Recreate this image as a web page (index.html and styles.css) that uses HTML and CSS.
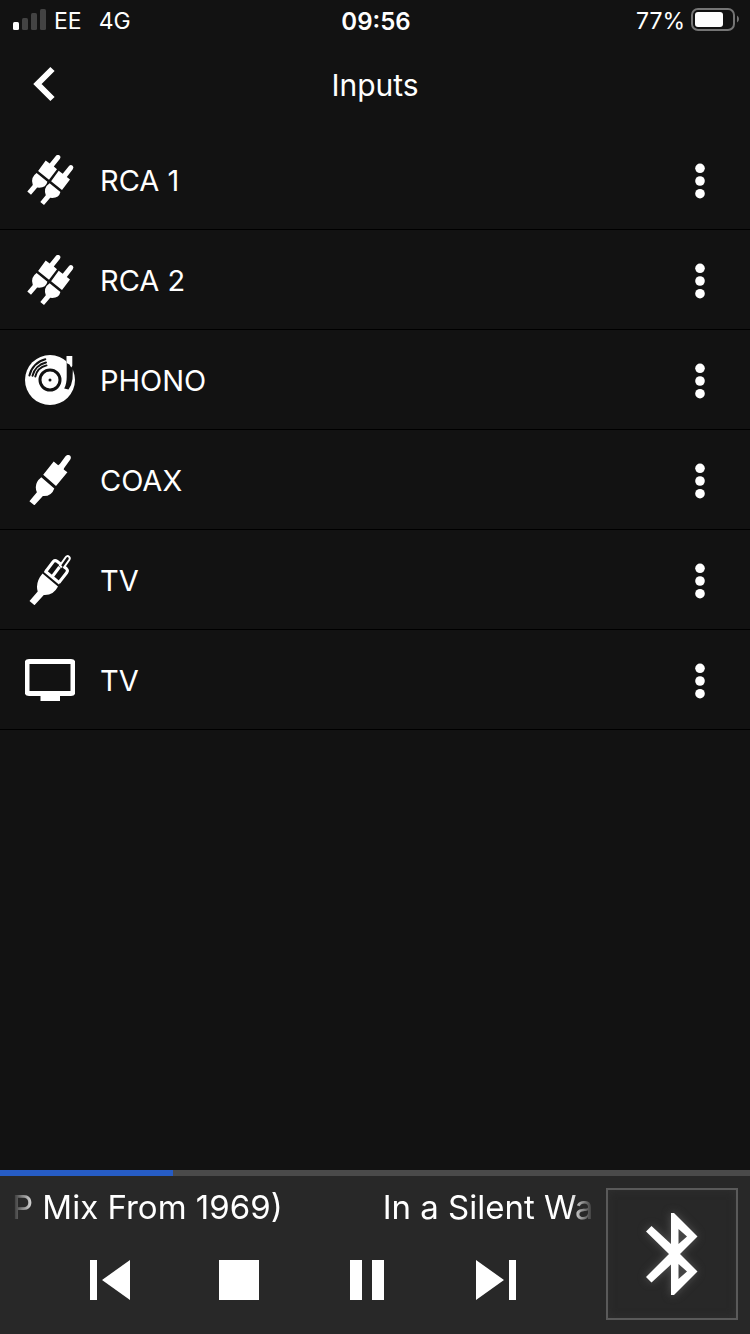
FILE: index.html
```html
<!DOCTYPE html>
<html lang="en">
<head>
<meta charset="utf-8">
<meta name="viewport" content="width=device-width, initial-scale=1">
<title>Inputs</title>
<link rel="stylesheet" href="styles.css">
</head>
<body>
<svg class="sprite" aria-hidden="true">
  <symbol id="dots" viewBox="0 0 10 36"><circle cx="5" cy="5.300" r="4.800"/><circle cx="5" cy="18" r="4.800"/><circle cx="5" cy="30.700" r="4.800"/></symbol>
  <symbol id="rca" viewBox="0 0 50 50">
    <path d="M20.700 5.500 24.700 8.500 31 .8Q32.700-1 34.600.5 36.200 2 34.800 3.900L28.800 11.600 32 14.300 24 24.800 13.100 16Z"/>
    <path d="M11.600 18 22.400 26.700Q20.900 33.500 12.200 32.500L6 39.700 2.300 36.600 7.800 30Q5 22.500 11.600 18Z"/>
    <path d="M33.700 15.800 37.700 18.800 44 11.100Q45.700 9.300 47.600 10.800 49.200 12.300 47.800 14.200L41.800 21.900 45 24.600 37 35.100 26.100 26.300Z"/>
    <path d="M24.600 28.300 35.400 37Q33.900 43.800 25.200 42.800L19 50 15.300 46.900 20.800 40.300Q18 32.800 24.600 28.300Z"/>
  </symbol>
  <symbol id="phono" viewBox="0 0 50 50">
    <circle cx="25" cy="25" r="25"/>
    <g class="cut"><circle cx="25" cy="25" r="10"/><path d="M4.400 20.500A21.200 21.200 0 0 1 20.300 4.300M7.500 20.800A18 18 0 0 1 21 7.500M10.300 21.500A15 15 0 0 1 21.500 10.400"/></g>
    <circle class="hole" cx="25" cy="25" r="1.500"/>
    <path class="hole" d="M40.500 0H48V11L47.500 24Q46.800 30 43.500 34.500L39.200 33.500Q41.700 29 41.700 22V9Z"/>
    <path d="M41.500 1H47.300V11L46.200 12.500 44.500 9.500 41.500 8Z"/>
  </symbol>
  <symbol id="coax" viewBox="0 0 50 50">
    <path d="M28.700 6.600 33.200 10.300 34.800 9.100 40.500 1.200Q42.600-1 45 .6 46.600 2.400 45.300 4.400L39 13.300 38.700 14.600 42.400 17.300 31 31 18.200 19.800Z"/>
    <path d="M16.300 22.300 29.300 33.400Q26.500 41.500 17.900 41L9.400 50.300 4.400 46.200 11.900 37.300Q8.300 28.700 16.300 22.300Z"/>
  </symbol>
  <symbol id="optical" viewBox="0 0 50 50">
    <path class="line" d="M20.800 16.500 28.300 6.500Q30 4.800 32 6.300L41.300 13.500Q43.300 15.300 41.800 17.500L34 27.500M27 22 34.500 12"/>
    <path class="pin" d="M36.800 12.500 35 10.500 40.500 2.500Q42.200.2 44 1.700 45.500 3 44.200 5L38.500 13"/>
    <path d="M20.600 14.500 35.700 27 33.900 29.500 18.800 17Z"/>
    <path d="M17.500 18.500 33 31.500Q28.500 40.500 18.800 40L9.500 50.200 4.500 46 12.700 36.500Q10 27.500 17.500 18.500Z"/>
  </symbol>
  <symbol id="tv" viewBox="0 0 50 50"><path fill-rule="evenodd" d="M4 4H46Q50.500 4 50.500 8.500V36.500Q50.500 41 46 41H35V46H15.500V41H4Q-.5 41-.5 36.500V8.500Q-.5 4 4 4ZM4.500 9V36H45.500V9Z"/></symbol>
</svg>
<div class="app">
  <div class="status">
    <div class="status-left">
      <svg class="signal" viewBox="0 0 33 26" aria-hidden="true"><rect y="14" width="6" height="8" rx="1.500"/><g class="faint"><rect x="9" y="10" width="6" height="12" rx="1.500"/><rect x="18" y="5" width="6" height="17" rx="1.500"/><rect x="27" y="1" width="6" height="21" rx="1.500"/></g></svg>
      <span>EE</span><span class="network">4G</span>
    </div>
    <time class="clock">09:56</time>
    <div class="status-right">
      <span>77%</span>
      <svg class="battery" viewBox="0 0 48 28" aria-hidden="true"><rect class="shell" x="1" y="2" width="42" height="21" rx="6"/><rect x="4" y="5" width="28" height="15" rx="3"/><path class="cap" d="M46 8.500Q48 9.500 48 12T46 15.500Z"/></svg>
    </div>
  </div>
  <header class="header">
    <button class="back" aria-label="Back"><svg viewBox="0 0 22 34"><path d="M19.500 2 4.500 17 19.500 32"/></svg></button>
    <h1>Inputs</h1>
  </header>
  <main class="content">
    <ul class="inputs">
      <li><button class="source"><svg class="icon"><use href="#rca"/></svg><span class="name">RCA 1</span></button><button class="more" aria-label="RCA 1 options"><svg><use href="#dots"/></svg></button></li>
      <li><button class="source"><svg class="icon"><use href="#rca"/></svg><span class="name">RCA 2</span></button><button class="more" aria-label="RCA 2 options"><svg><use href="#dots"/></svg></button></li>
      <li><button class="source"><svg class="icon"><use href="#phono"/></svg><span class="name">PHONO</span></button><button class="more" aria-label="Phono options"><svg><use href="#dots"/></svg></button></li>
      <li><button class="source"><svg class="icon"><use href="#coax"/></svg><span class="name">COAX</span></button><button class="more" aria-label="Coax options"><svg><use href="#dots"/></svg></button></li>
      <li><button class="source"><svg class="icon"><use href="#optical"/></svg><span class="name">TV</span></button><button class="more" aria-label="Optical TV options"><svg><use href="#dots"/></svg></button></li>
      <li><button class="source"><svg class="icon"><use href="#tv"/></svg><span class="name">TV</span></button><button class="more" aria-label="TV options"><svg><use href="#dots"/></svg></button></li>
    </ul>
  </main>
  <footer class="player">
    <div class="progress"><div class="elapsed" style="width:23%"></div></div>
    <div class="player-body">
      <div class="playing">
        <div class="ticker"><div class="track"><span>P Mix From 1969)</span><span>In a Silent Way</span></div></div>
        <div class="controls">
          <button aria-label="Previous"><svg viewBox="0 0 40 40"><path d="M0 0H7V40H0ZM40 0V40L12 20Z"/></svg></button>
          <button aria-label="Stop"><svg viewBox="0 0 40 40"><path d="M0 0H40V40H0Z"/></svg></button>
          <button aria-label="Pause"><svg viewBox="0 0 40 40"><path d="M3 0H15V40H3ZM25 0H37V40H25Z"/></svg></button>
          <button aria-label="Next"><svg viewBox="0 0 40 40"><path d="M0 0 28 20 0 40ZM33 0H40V40H33Z"/></svg></button>
        </div>
      </div>
      <button class="bluetooth" aria-label="Bluetooth"><svg viewBox="0 0 52 82"><path fill-rule="evenodd" d="M25 0H28L51.500 23.500 34 41 51.500 58.500 28 82H25V51.500L5.500 69.500 0 64 23 41 0 18.500 5.500 13 25 31ZM32.500 16V31L41 23.500ZM32.500 51V66L41 58.500Z"/></svg></button>
    </div>
  </footer>
</div>
</body>
</html>
```
FILE: styles.css
```css
* { box-sizing: border-box; }
body {
  margin: 0;
  background: #121212;
  color: #fff;
  font-family: Inter, "Liberation Sans", sans-serif;
}
button {
  border: 0;
  padding: 0;
  background: none;
  color: inherit;
  font: inherit;
}
svg { display: block; fill: #fff; overflow: visible; }
.sprite { position: absolute; width: 0; height: 0; }
.app { display: flex; flex-direction: column; min-height: 100vh; }

.status {
  display: grid;
  grid-template-columns: 1fr auto 1fr;
  align-items: center;
  height: 42px;
  padding: 0 11px 0 13px;
  font-size: 23px;
}
.status-left, .status-right { display: flex; align-items: center; }
.status-left { gap: 8px; }
.status-right { justify-content: flex-end; gap: 6px; }
.network { margin-left: 9px; }
.clock { font-size: 24px; font-weight: 600; }
.signal { width: 33px; height: 26px; }
.faint { fill: #434343; }
.battery { width: 48px; height: 28px; }
.shell { fill: none; stroke: #757575; stroke-width: 2; }
.cap { fill: #757575; }

.header {
  display: grid;
  grid-template-columns: 90px 1fr 90px;
  align-items: center;
  height: 88px;
}
.header h1 {
  margin: 0;
  padding-bottom: 2px;
  text-align: center;
  font-size: 30px;
  font-weight: 400;
}
.back { display: flex; height: 88px; padding: 0 0 4px 33px; align-items: center; }
.back svg { width: 22px; height: 34px; fill: none; stroke: #fff; stroke-width: 6; }

.content { flex: 1; }
.inputs { margin: 0; padding: 0; list-style: none; }
.inputs li { display: flex; height: 100px; border-bottom: 1px solid #000; }
.source {
  display: flex;
  flex: 1;
  align-items: center;
  gap: 25px;
  padding-left: 25px;
  font-size: 29px;
  text-align: left;
}
.icon { width: 50px; height: 50px; }
.name { padding-top: 2px; }
.more { display: flex; width: 100px; padding-top: 2px; align-items: center; justify-content: center; }
.more svg { width: 10px; height: 36px; }
.cut { fill: none; stroke: #121212; stroke-width: 2; stroke-linecap: round; }
.cut circle { stroke-width: 3; }
.hole { fill: #121212; }
.line { fill: none; stroke: #fff; stroke-width: 3; }
.pin { fill: #121212; stroke: #fff; stroke-width: 2; }

.player { background: #282828; }
.progress { height: 6px; background: #4a4a4a; }
.elapsed { height: 6px; background: #265cc5; }
.player-body { display: flex; gap: 12px; height: 158px; padding: 11px 12px 15px; }
.playing { flex: 1; min-width: 0; }
.ticker {
  overflow: hidden;
  -webkit-mask-image: linear-gradient(to right, transparent, #000 24px, #000 calc(100% - 24px), transparent);
  mask-image: linear-gradient(to right, transparent, #000 24px, #000 calc(100% - 24px), transparent);
}
.track { display: flex; gap: 100px; font-size: 33px; line-height: 40px; white-space: nowrap; }
.controls { display: flex; justify-content: space-between; padding: 33px 78px 0; }
.controls svg { width: 40px; height: 40px; }
.bluetooth {
  display: flex;
  width: 132px;
  height: 132px;
  margin-top: 1px;
  align-items: center;
  justify-content: center;
  border: 2px solid #5a5a5a;
  box-shadow: inset 0 0 8px #303030;
}
.bluetooth svg { width: 52px; height: 82px; filter: drop-shadow(0 0 4px #555); }
```
